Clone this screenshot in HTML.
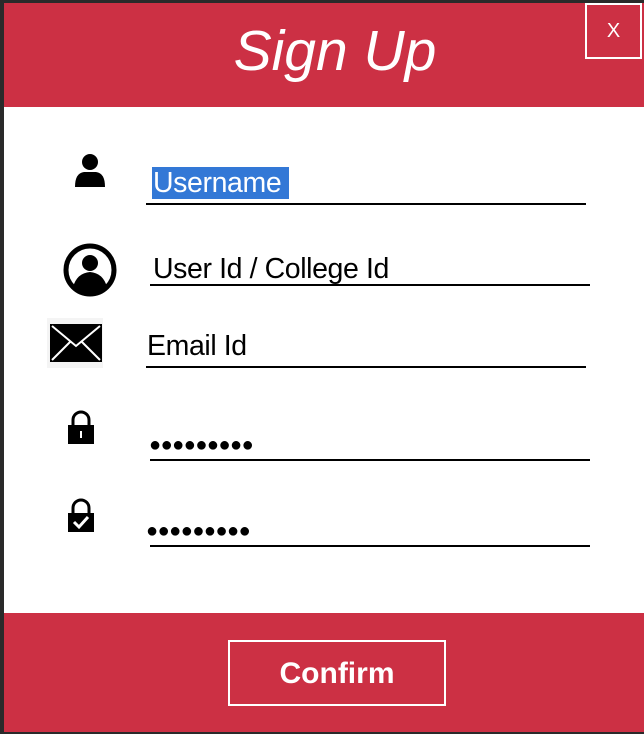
<!DOCTYPE html>
<html><head><style>
body{margin:0;width:644px;height:734px;background:#2a2a2a;position:relative;overflow:hidden;font-family:"Liberation Sans",Arial,sans-serif}
.a{position:absolute}
.red{background:#cc3044}
.line{position:absolute;height:2px;background:#000}
.t{position:absolute;font-size:28.5px;color:#000;line-height:30px;letter-spacing:-0.4px}
.dots{position:absolute;font-size:20px;letter-spacing:-0.5px;color:#000;font-weight:bold}
</style></head><body>
<div class="a red" style="left:4px;top:3px;width:640px;height:104px"></div>
<div class="a" style="left:4px;top:107px;width:640px;height:506px;background:#fff"></div>
<div class="a red" style="left:4px;top:613px;width:640px;height:119px"></div>
<div class="a" style="left:0;top:18px;width:670px;text-align:center;font-size:57px;font-style:italic;color:#fff;line-height:66px">Sign Up</div>
<div class="a" style="left:585px;top:3px;width:53px;height:52px;border:2px solid #fff;color:#fff;font-size:20px;text-align:center;line-height:52px">X</div>
<div class="a" style="left:228px;top:640px;width:214px;height:62px;border:2px solid #fff;color:#fff;font-size:30px;font-weight:bold;text-align:center;line-height:64px">Confirm</div>

<svg class="a" style="left:73px;top:153px" width="34" height="36" viewBox="0 0 34 36"><circle cx="17" cy="9" r="8"/><path d="M2 34 Q2 20 11 19 L23 19 Q32 20 32 34 Z"/></svg>
<svg class="a" style="left:63px;top:243px" width="54" height="54" viewBox="0 0 54 54"><circle cx="27" cy="27" r="24" fill="#fff" stroke="#000" stroke-width="5"/><circle cx="27" cy="20" r="8"/><path d="M10 44 Q14 30 27 29 Q40 30 44 44 Q36 51 27 51 Q18 51 10 44Z"/></svg>
<div class="a" style="left:47px;top:318px;width:56px;height:50px;background:#f4f4f4"></div>
<svg class="a" style="left:50px;top:324px" width="52" height="38" viewBox="0 0 52 38"><rect width="52" height="38"/><path d="M2 2 L26 22 L50 2 M2 36 L20 18 M50 36 L32 18" stroke="#fff" stroke-width="2" fill="none"/></svg>
<svg class="a" style="left:67px;top:410px" width="28" height="35" viewBox="0 0 28 35"><path d="M6 15 V10 A8 8 0 0 1 22 10 V15" stroke="#000" stroke-width="3" fill="none"/><rect x="1" y="15" width="26" height="19"/><rect x="13" y="21" width="2" height="7" fill="#fff"/></svg>
<svg class="a" style="left:67px;top:498px" width="28" height="35" viewBox="0 0 28 35"><path d="M6 15 V10 A8 8 0 0 1 22 10 V15" stroke="#000" stroke-width="3" fill="none"/><rect x="1" y="15" width="26" height="19"/><path d="M7 24 L12 29 L21 19" stroke="#fff" stroke-width="3" fill="none"/></svg>

<div class="a" style="left:152px;top:167px;width:137px;height:32px;background:#3378d6"></div>
<div class="t" style="left:153px;top:168px;color:#fff">Username</div>
<div class="line" style="left:146px;top:203px;width:440px"></div>
<div class="t" style="left:153px;top:254px">User Id / College Id</div>
<div class="line" style="left:150px;top:284px;width:440px"></div>
<div class="t" style="left:147px;top:331px">Email Id</div>
<div class="line" style="left:146px;top:366px;width:440px"></div>
<div class="dots" style="left:149px;top:434px">●●●●●●●●●</div>
<div class="line" style="left:150px;top:459px;width:440px"></div>
<div class="dots" style="left:146px;top:520px">●●●●●●●●●</div>
<div class="line" style="left:150px;top:545px;width:440px"></div>
</body></html>
